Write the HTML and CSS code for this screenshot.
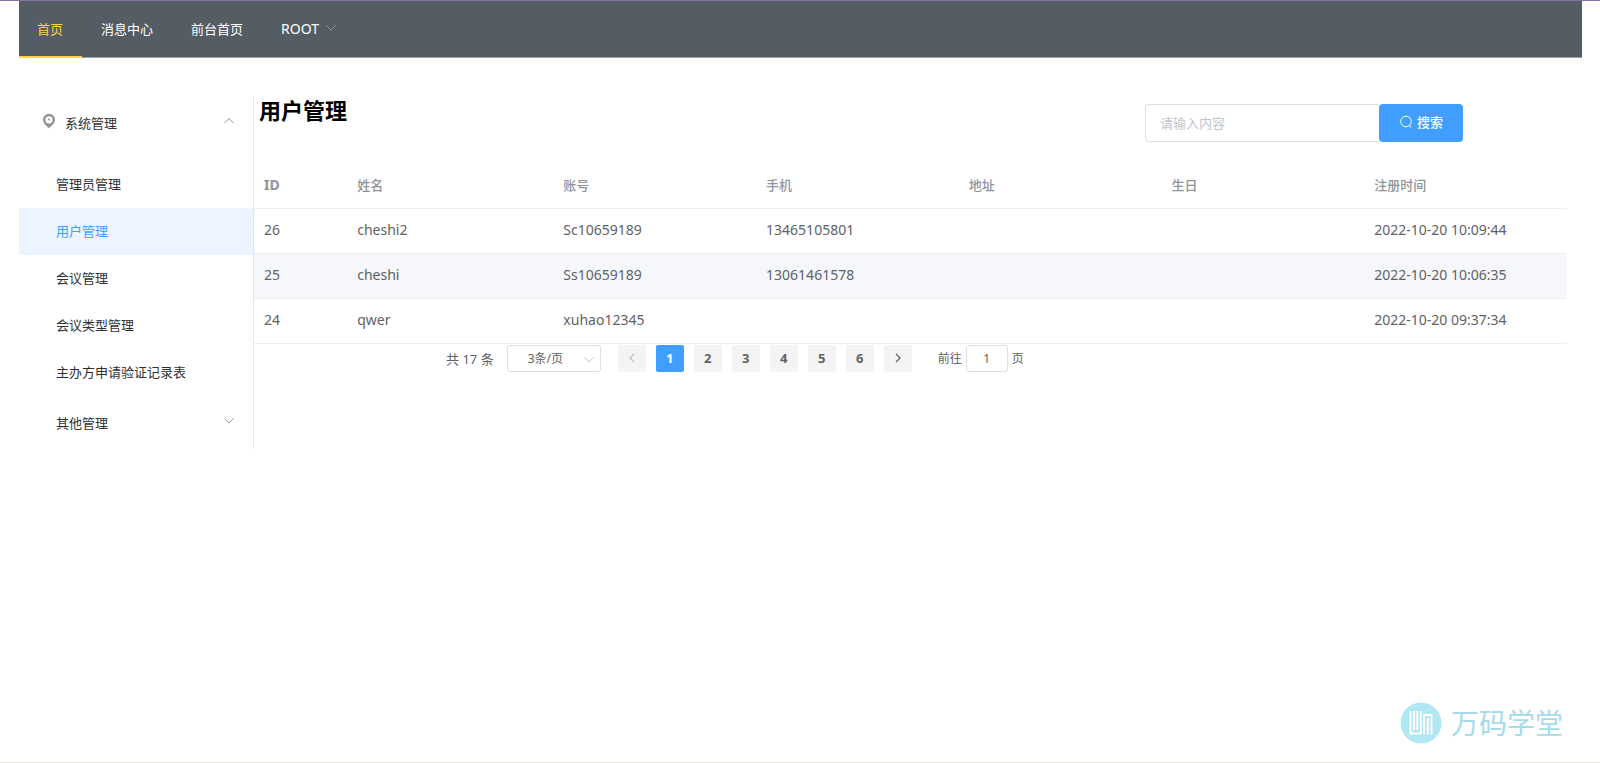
FILE: index.html
```html
<!DOCTYPE html>
<html lang="zh-CN">
<head>
<meta charset="utf-8">
<title>用户管理</title>
<link rel="stylesheet" href="styles.css">
</head>
<body>
<div class="page">
  <nav class="topnav">
    <a class="topnav-item is-active" href="#">首页</a>
    <a class="topnav-item" href="#">消息中心</a>
    <a class="topnav-item" href="#">前台首页</a>
    <a class="topnav-item is-latin" href="#">ROOT
      <svg class="chevron nav-chevron" viewBox="0 0 12 12"><path d="M1.5 3.5 6 8l4.500-4.500"/></svg>
    </a>
  </nav>

  <div class="layout">
    <aside class="sidebar">
      <button class="group-title" type="button">
        <svg class="pin" viewBox="0 0 14 16"><path fill-rule="evenodd" d="M7 .8a6 6 0 0 0-6 6c0 3.200 2.500 5.200 6 8.400 3.500-3.200 6-5.200 6-8.400a6 6 0 0 0-6-6Zm0 2.400a3.600 3.600 0 1 1 0 7.200 3.600 3.600 0 0 1 0-7.200Z"/><circle cx="7" cy="6.500" r="1"/></svg>
        <span>系统管理</span>
        <svg class="chevron" viewBox="0 0 12 12"><path d="M1.500 8 6 3.500 10.500 8"/></svg>
      </button>
      <div class="group-items">
        <a class="side-item" href="#">管理员管理</a>
        <a class="side-item is-active" href="#">用户管理</a>
        <a class="side-item" href="#">会议管理</a>
        <a class="side-item" href="#">会议类型管理</a>
        <a class="side-item" href="#">主办方申请验证记录表</a>
      </div>
      <button class="group-title is-plain" type="button">
        <span>其他管理</span>
        <svg class="chevron" viewBox="0 0 12 12"><path d="M1.500 3.500 6 8l4.500-4.500"/></svg>
      </button>
    </aside>

    <main class="main">
      <header class="main-head">
        <h1 class="title">用户管理</h1>
        <form class="search">
          <input class="search-input" type="text" placeholder="请输入内容" aria-label="搜索内容">
          <button class="search-btn" type="button">
            <svg class="search-icon" viewBox="0 0 14 14"><circle cx="7" cy="6.500" r="5.300"/><path d="M9.800 10.200 12.300 12.500"/></svg>
            <span>搜索</span>
          </button>
        </form>
      </header>

      <table class="users">
        <thead>
          <tr><th class="col-id">ID</th><th class="col-name">姓名</th><th>账号</th><th>手机</th><th>地址</th><th>生日</th><th>注册时间</th></tr>
        </thead>
        <tbody>
          <tr><td>26</td><td>cheshi2</td><td>Sc10659189</td><td>13465105801</td><td></td><td></td><td>2022-10-20 10:09:44</td></tr>
          <tr><td>25</td><td>cheshi</td><td>Ss10659189</td><td>13061461578</td><td></td><td></td><td>2022-10-20 10:06:35</td></tr>
          <tr><td>24</td><td>qwer</td><td>xuhao12345</td><td></td><td></td><td></td><td>2022-10-20 09:37:34</td></tr>
        </tbody>
      </table>

      <div class="pagination">
        <span class="total">共 17 条</span>
        <span class="size-wrap">
          <select class="size" aria-label="每页条数"><option>3条/页</option></select>
          <svg class="chevron size-chevron" viewBox="0 0 12 12"><path d="M1.500 3.500 6 8l4.500-4.500"/></svg>
        </span>
        <div class="pager">
          <button class="page-btn" type="button" aria-label="上一页" disabled><svg class="arrow" viewBox="0 0 12 12"><path d="M8 2 4 6l4 4"/></svg></button>
          <button class="page-btn is-active" type="button">1</button>
          <button class="page-btn" type="button">2</button>
          <button class="page-btn" type="button">3</button>
          <button class="page-btn" type="button">4</button>
          <button class="page-btn" type="button">5</button>
          <button class="page-btn" type="button">6</button>
          <button class="page-btn" type="button" aria-label="下一页"><svg class="arrow" viewBox="0 0 12 12"><path d="M4 2l4 4-4 4"/></svg></button>
        </div>
        <label class="jump">前往 <input class="jump-input" type="text" value="1"> 页</label>
      </div>
    </main>
  </div>

  <div class="brand">
    <svg class="brand-logo" viewBox="0 0 42 42"><circle class="disc" cx="21" cy="21" r="20.500"/><path class="lines" d="M10.500 9v22.500h10.300V9M14 9v19M17.300 28V9M24 32.500V13h7.500v19.500M27.800 16v16.500"/></svg>
    <span>万码学堂</span>
  </div>
</div>
</body>
</html>
```

FILE: styles.css
```css
* { box-sizing: border-box; }

body {
  margin: 0;
  background: #fff;
  color: #303133;
  font-family: "Noto Sans", "Noto Sans CJK SC", sans-serif;
  font-size: 13px;
}

button, input, select { font: inherit; color: inherit; }
a { color: inherit; text-decoration: none; }

.page {
  position: relative;
  min-height: 100vh;
  border-top: 1px solid #8273a0;
  border-bottom: 1px solid #eee2e2;
}

.topnav {
  display: flex;
  height: 57px;
  margin: 0 18px 0 19px;
  background: #545c64;
  border-bottom: 1px solid #9a9fa4;
  color: #fff;
}

.topnav-item {
  display: flex;
  align-items: center;
  height: 57px;
  padding: 0 19px 1px 18px;
  border-bottom: 2px solid transparent;
}

.topnav-item + .topnav-item { padding-left: 19px; }
.topnav-item.is-active { color: #ffd04b; border-bottom-color: #ffd04b; }
.topnav-item.is-latin { font-size: 14px; }

.chevron {
  width: 12px;
  height: 12px;
  fill: none;
  stroke: #909399;
  stroke-width: 1;
}

.nav-chevron { margin-left: 6px; }

.layout {
  display: flex;
  align-items: flex-start;
  margin: 38px 33px 0 19px;
}

.sidebar {
  flex: none;
  width: 235px;
  border-right: 1px solid #e6e6e6;
}

.group-title {
  display: flex;
  align-items: center;
  width: 100%;
  height: 53px;
  padding: 0 18px 0 23px;
  border: 0;
  background: none;
  text-align: left;
}

.group-title.is-plain { padding-left: 37px; }
.group-title .chevron { margin: 0 0 4px auto; }

.pin { width: 14px; height: 16px; margin: 0 9px 3px 0; fill: #909399; }

.group-items { padding-top: 12px; }

.side-item {
  display: flex;
  align-items: center;
  height: 47px;
  padding: 0 0 3px 37px;
}

.side-item.is-active { background: #ecf5ff; color: #409eff; }

.main { flex: 1; min-width: 0; }

.main-head {
  display: flex;
  justify-content: space-between;
  align-items: flex-start;
  height: 67px;
  padding: 0 104px 0 5px;
}

.title {
  margin: 0;
  color: #000;
  font-size: 22px;
  line-height: 28px;
  font-weight: 700;
}

.search { display: flex; margin-top: 8px; }

.search-input {
  width: 234px;
  height: 38px;
  padding: 0 14px 1px;
  border: 1px solid #dcdfe6;
  border-right: 0;
  border-radius: 4px 0 0 4px;
  background: #fff;
}

.search-input::placeholder { color: #c0c4cc; opacity: 1; }

.search-btn {
  display: flex;
  align-items: center;
  justify-content: center;
  gap: 4px;
  width: 84px;
  height: 38px;
  padding: 0 0 3px;
  border: 0;
  border-radius: 4px;
  background: #409eff;
  color: #fff;
  font-weight: 500;
}

.search-icon { width: 14px; height: 14px; fill: none; stroke: #fff; stroke-width: 1; }

.users {
  width: 100%;
  border-collapse: collapse;
  table-layout: fixed;
  color: #606266;
  font-size: 14px;
}

.users th, .users td {
  height: 45px;
  padding: 0 10px 2px;
  border-bottom: 1px solid #ebeef5;
  text-align: left;
}

.users th { color: #909399; font-size: 13px; font-weight: 500; }
.users tbody tr:nth-child(even) { background: #f5f7fa; }
.users .col-id { width: 7.1%; font-size: 14px; font-weight: 700; }
.col-name { width: 15.7%; }

.pagination {
  display: flex;
  align-items: center;
  margin-top: 1px;
  padding-left: 192px;
  color: #606266;
  font-size: 12px;
}

.total { font-size: 13px; }

.size-wrap { position: relative; margin-left: 13px; }

.size {
  appearance: none;
  display: block;
  width: 94px;
  height: 27px;
  padding: 0 20px;
  border: 1px solid #dcdfe6;
  border-radius: 3px;
  background: #fff;
}

.size-chevron { position: absolute; right: 6px; top: 9px; stroke: #c0c4cc; }

.pager { display: flex; gap: 10px; margin: 0 26px 0 17px; }

.page-btn {
  display: flex;
  align-items: center;
  justify-content: center;
  width: 28px;
  height: 27px;
  padding: 0 0 1px;
  border: 0;
  border-radius: 2px;
  background: #f4f4f5;
  font-size: 13px;
  font-weight: 700;
}

.page-btn.is-active { background: #409eff; color: #fff; }

.arrow { width: 12px; height: 12px; fill: none; stroke: #606266; stroke-width: 1.300; }
.page-btn:disabled .arrow { stroke: #c0c4cc; }

.jump { display: flex; align-items: center; gap: 4px; }

.jump-input {
  width: 42px;
  height: 27px;
  padding: 0;
  border: 1px solid #dcdfe6;
  border-radius: 3px;
  text-align: center;
}

.brand {
  position: absolute;
  right: 37px;
  bottom: 18px;
  display: flex;
  align-items: center;
  gap: 9px;
  color: #a6dbea;
  font-size: 28px;
  font-weight: 400;
  line-height: 42px;
}

.brand-logo { width: 42px; height: 42px; }
.disc { fill: #afe7f2; }
.lines { fill: none; stroke: #fff; stroke-width: 2; }
```
